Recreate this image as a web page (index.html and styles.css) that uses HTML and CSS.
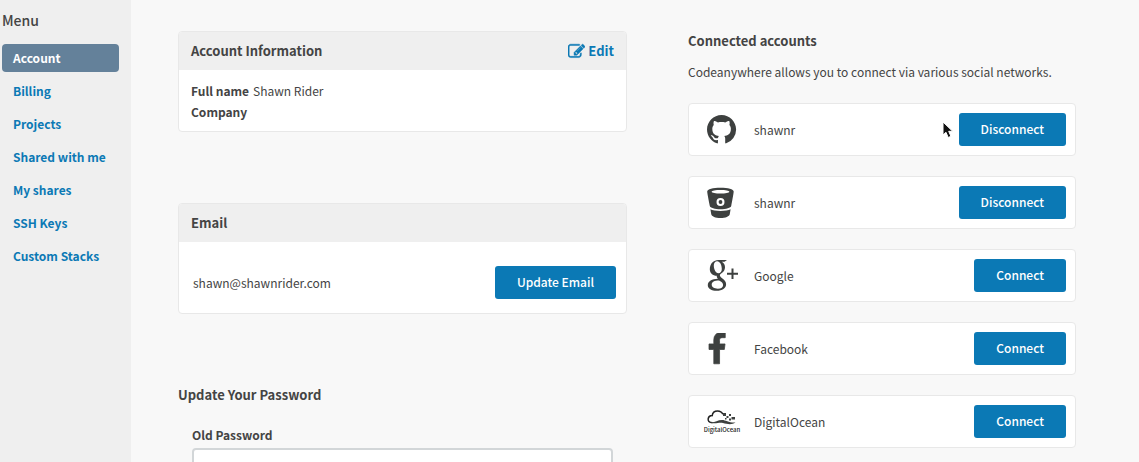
FILE: index.html
```html
<!DOCTYPE html>
<html lang="en">
<head>
<meta charset="utf-8">
<title>Account</title>
<link rel="stylesheet" href="styles.css">
</head>
<body>
<div class="layout">
  <nav class="sidebar" aria-label="Menu">
    <h2 class="sidebar-title">Menu</h2>
    <ul class="menu">
      <li><a class="menu-link active" href="#account">Account</a></li>
      <li><a class="menu-link" href="#billing">Billing</a></li>
      <li><a class="menu-link" href="#projects">Projects</a></li>
      <li><a class="menu-link" href="#shared">Shared with me</a></li>
      <li><a class="menu-link" href="#shares">My shares</a></li>
      <li><a class="menu-link" href="#ssh">SSH Keys</a></li>
      <li><a class="menu-link" href="#stacks">Custom Stacks</a></li>
    </ul>
  </nav>
  <main class="content">
    <div class="profile">
      <section class="panel">
        <header class="panel-head">
          <h2 class="title">Account Information</h2>
          <a class="edit" href="#edit"><svg class="edit-icon" viewBox="0 0 1792 1792" aria-hidden="true"><path d="M888 1184l116-116-152-152-116 116v56h96v96h56zm440-720q-16-16-33 1l-350 350q-17 17-1 33t33-1l350-350q17-17 1-33zm80 594v190q0 119-84.500 203.500t-203.500 84.500h-832q-119 0-203.500-84.500t-84.500-203.500v-832q0-119 84.500-203.500t203.500-84.500h832q63 0 117 25 15 7 18 23 3 17-9 29l-49 49q-14 14-32 8-23-6-45-6h-832q-66 0-113 47t-47 113v832q0 66 47 113t113 47h832q66 0 113-47t47-113v-126q0-13 9-22l64-64q15-15 35-7t20 29zm-96-738l288 288-672 672h-288v-288zm444 132l-92 92-288-288 92-92q28-28 68-28t68 28l152 152q28 28 28 68t-28 68z"/></svg>Edit</a>
        </header>
        <dl class="details">
          <div class="detail"><dt>Full name</dt><dd>Shawn Rider</dd></div>
          <div class="detail"><dt>Company</dt><dd></dd></div>
        </dl>
      </section>
      <section class="panel">
        <header class="panel-head"><h2 class="title">Email</h2></header>
        <div class="email-row">
          <span>shawn@shawnrider.com</span>
          <button class="button" type="button">Update Email</button>
        </div>
      </section>
      <section class="password">
        <h2 class="title">Update Your Password</h2>
        <form class="password-form">
          <label class="label" for="old-password">Old Password</label>
          <input class="field" id="old-password" type="password">
        </form>
      </section>
    </div>
    <section class="connections">
      <h2 class="title">Connected accounts</h2>
      <p class="intro">Codeanywhere allows you to connect via various social networks.</p>
      <ul class="accounts">
        <li class="account">
          <svg class="logo" viewBox="0 0 40 32" aria-label="GitHub"><path transform="translate(5 1) scale(1.82)" d="M8 0C3.58 0 0 3.58 0 8c0 3.54 2.29 6.53 5.47 7.59.4.07.55-.17.55-.38 0-.19-.01-.82-.01-1.490-2.010.37-2.530-.490-2.690-.940-.09-.230-.480-.940-.820-1.130-.280-.150-.680-.520-.010-.530.630-.010 1.080.580 1.230.820.720 1.210 1.870.870 2.330.660.070-.520.280-.870.510-1.070-1.780-.200-3.640-.890-3.640-3.950 0-.870.310-1.590.820-2.150-.080-.200-.360-1.020.080-2.120 0 0 .670-.210 2.200.820.640-.180 1.320-.270 2-.270s1.360.090 2 .270c1.530-1.040 2.200-.820 2.200-.820.440 1.100.160 1.920.080 2.120.510.560.820 1.270.820 2.150 0 3.070-1.870 3.750-3.650 3.950.290.250.540.730.540 1.480 0 1.070-.010 1.930-.010 2.200 0 .210.150.460.550.380A8 8 0 0 0 16 8c0-4.420-3.580-8-8-8z"/></svg>
          <span class="account-name">shawnr</span>
          <button class="button" type="button">Disconnect</button>
          <svg class="pointer" viewBox="0 0 12 18" aria-hidden="true"><path d="M1 1v13l3-2.700 2.200 5.200 2.700-1.200-2.200-5h4z"/></svg>
        </li>
        <li class="account">
          <svg class="logo" viewBox="0 0 40 32" aria-label="Bitbucket"><path fill-rule="evenodd" d="M5.200 4.500C5.200 2.200 11 .8 18.500.8s13.200 1.400 13.200 3.700c0 1.400-1.600 9.800-2.500 14.500-.3 1.800-5.200 3.200-10.700 3.200S8.100 20.800 7.800 19C6.900 14.300 5.200 5.900 5.200 4.500zM9.700 4.700c0 1.100 3.900 1.900 8.800 1.900s8.800-.8 8.800-1.900-3.900-1.700-8.800-1.700-8.800.6-8.800 1.700zM18.500 11a4 4 0 1 0 0 8 4 4 0 0 0 0-8z"/><circle cx="18.500" cy="15" r="1.900"/><path d="M8.400 22.300c3.700 2.300 16.500 2.300 20.200 0l-.8 4.600c-.4 2.500-4.300 4-9.300 4s-8.900-1.500-9.300-4z"/></svg>
          <span class="account-name">shawnr</span>
          <button class="button" type="button">Disconnect</button>
        </li>
        <li class="account">
          <svg class="logo" viewBox="0 0 40 32" aria-label="Google Plus"><path fill-rule="evenodd" d="M16.500 0H25l-2.500 1.700h-2.700c2.100 1.300 3.200 3.100 3.200 5.500 0 2.700-1.400 4.400-3.200 5.800-1.500 1.100-1.900 1.700-1.900 2.500s.6 1.400 1.900 2.400c2.900 2.100 4.300 3.700 4.300 6.300 0 3.900-3.800 6.600-9.400 6.600-5.200 0-8.900-2.200-8.900-5.600 0-3.700 4.200-6.300 10.100-6.400-.9-.9-1.300-1.800-1.100-3-4 0-7-2.800-7-6.600C7.900 3.700 11.500 0 16.500 0zM15.200 1.300c-2.100 0-3.400 1.700-3.400 4.300 0 3.800 1.900 7.600 4.500 7.600 2.300 0 3.500-1.600 3.500-4.200 0-4-1.900-7.700-4.600-7.700zM17 20.500c-4.700 0-7.300 1.500-7.300 4.100 0 2.500 2.400 4.100 6.100 4.100 3.500 0 5.300-1.500 5.300-3.700 0-1.900-1.300-3-4.100-4.500z"/><path d="M29.500 8.500h2v4.200H36v2h-4.500V19h-2v-4.300H25v-2h4.500z"/></svg>
          <span class="account-name">Google</span>
          <button class="button" type="button">Connect</button>
        </li>
        <li class="account">
          <svg class="logo" viewBox="0 0 40 32" aria-label="Facebook"><path transform="translate(-2 -.5) scale(.0188)" stroke="#3d403f" stroke-width="40" d="M1343 12v264h-157q-86 0-116 36t-30 108v189h293l-39 296h-254v759h-306v-759h-255v-296h255v-218q0-186 104-288.500t277-102.500q147 0 228 12z"/></svg>
          <span class="account-name">Facebook</span>
          <button class="button" type="button">Connect</button>
        </li>
        <li class="account">
          <svg class="logo" viewBox="0 0 40 32" aria-label="DigitalOcean"><path class="cloud" d="M10.500 16.800C7 16.500 5.800 14.800 6.200 12.700c.4-2 2-3.200 4-3.100C10.500 6.800 12.800 5 15.600 5c2.400 0 4.300 1.200 5.200 3.200"/><path d="M7 16c5 1.500 8-2 13-2 4 0 7 3 13.500 2.500-4 2.800-8.500 1.500-12.500.5-4.500-1.200-8 2-14-1zM21 7h3v3h-3zM24.500 10h2v2h-2zM27 8h2v2h-2zM29.500 11h3.500v2.500h-3.500zM27 12.500h2v2h-2zM23 12h1.500v1.500H23z"/><text class="logo-caption" x="20" y="26" text-anchor="middle">DigitalOcean</text></svg>
          <span class="account-name">DigitalOcean</span>
          <button class="button" type="button">Connect</button>
        </li>
      </ul>
    </section>
  </main>
</div>
</body>
</html>
```
FILE: styles.css
```css
* { box-sizing: border-box; }
body {
  margin: 0;
  background: #f8f8f8;
  color: #444;
  font-family: "Noto Sans CJK SC", "Noto Sans", sans-serif;
  font-size: 12px;
  line-height: 20px;
}
h2, p, ul, dl, dd { margin: 0; padding: 0; }
ul { list-style: none; }
a { color: #0b79b5; text-decoration: none; }
.layout { display: grid; grid-template-columns: 131px 1fr; min-height: 100vh; }
.sidebar { padding: 10px 12px 0 2px; background: #efefef; }
.sidebar-title { font-size: 14px; font-weight: 500; line-height: 20px; }
.menu { display: grid; gap: 5px; margin-top: 14px; }
.menu-link { display: block; padding: 4px 11px; border-radius: 4px; font-weight: 700; }
.menu-link.active { background: #64819a; color: #fff; }
.content {
  display: grid;
  grid-template-columns: 449fr 388fr;
  gap: 61px;
  align-items: start;
  padding: 31px 63px 0 47px;
}
.profile { display: grid; gap: 71px; }
.title { font-size: 13px; font-weight: 700; line-height: 20px; }
.panel { border: 1px solid #e8e8e8; border-radius: 4px; background: #fff; overflow: hidden; }
.panel-head { display: flex; justify-content: space-between; padding: 9px 12px; background: #efefef; }
.edit { display: flex; align-items: center; gap: 3px; font-size: 13px; font-weight: 700; }
.edit-icon { width: 17px; height: 17px; fill: currentColor; stroke: currentColor; stroke-width: 50px; }
.details { padding: 10px 12px 9px; line-height: 21px; }
.detail { display: flex; gap: 4px; }
dt, .label { font-weight: 700; }
.email-row { display: flex; align-items: center; justify-content: space-between; padding: 24px 10px 14px 14px; }
.button {
  padding: 6px 22px 7px;
  border: 0;
  border-radius: 3px;
  background: #0b79b5;
  color: #fff;
  font: inherit;
  font-weight: 500;
}
.password-form { display: grid; gap: 3px; margin-top: 20px; padding: 0 14px; }
.field { width: 100%; height: 34px; border: 2px solid #d2d6d8; border-radius: 4px; background: #fff; }
.intro { margin-top: 11px; }
.accounts { display: grid; gap: 20px; margin-top: 21px; }
.account {
  position: relative;
  display: flex;
  align-items: center;
  padding: 9px 9px 9px 13px;
  border: 1px solid #e8e8e8;
  border-radius: 4px;
  background: #fff;
}
.logo { width: 40px; height: 32px; fill: #3d403f; }
.account-name { flex: 1; padding-left: 12px; }
.cloud { fill: none; stroke: #222; stroke-width: 1.5; }
.logo-caption { font-size: 6px; font-weight: 500; fill: #222; }
.pointer { position: absolute; right: 121px; top: 17px; width: 12px; height: 18px; fill: #111; stroke: #fff; }
```
